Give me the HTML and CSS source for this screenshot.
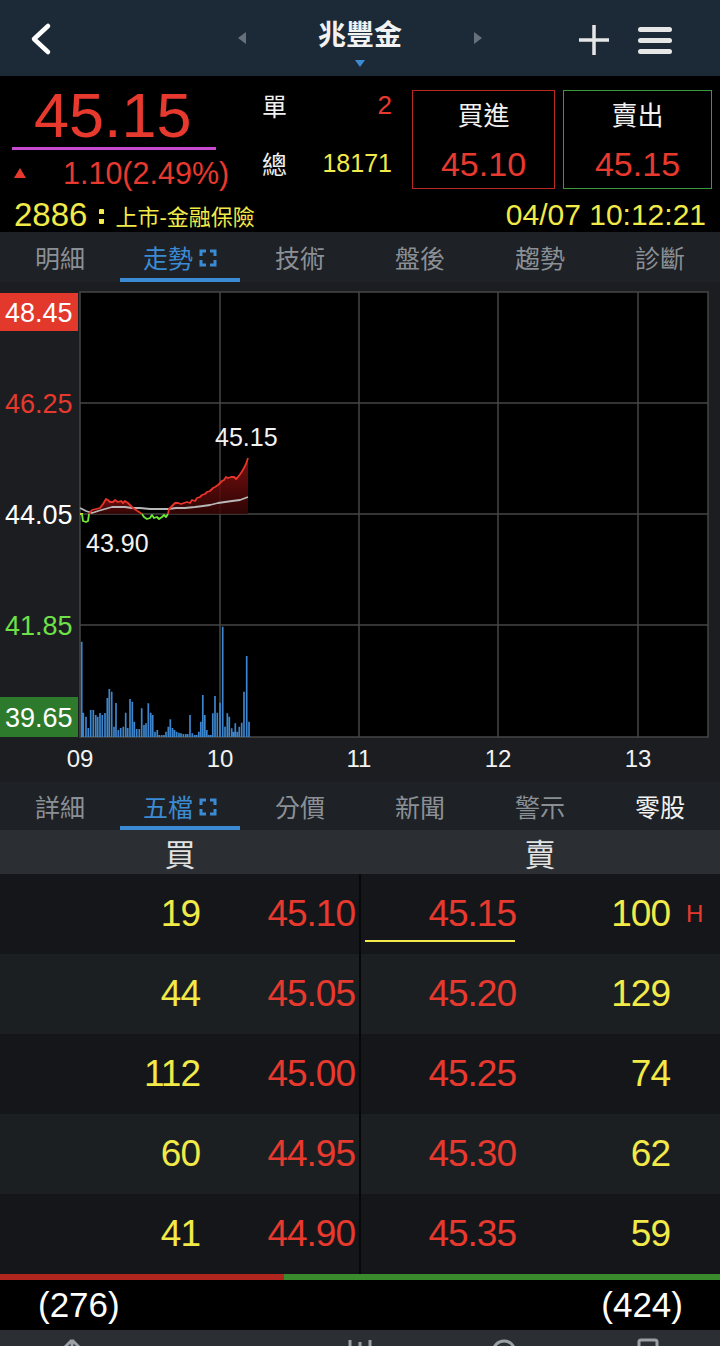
FILE: index.html
```html
<!DOCTYPE html>
<html lang="zh-Hant">
  <head>
    <meta charset="UTF-8" />
    <title>兆豐金 - 走勢</title>
    <link rel="stylesheet" href="styles.css" />
  </head>
  <body>
    <!-- Top bar -->
    <header class="topbar">
      <button class="icon-btn back-btn" aria-label="返回">
        <svg width="26" height="34" viewBox="0 0 26 34">
          <path d="M20 4 L6 17 L20 30" fill="none" stroke="#fff" stroke-width="4.5" stroke-linecap="round" stroke-linejoin="round" />
        </svg>
      </button>
      <div class="stock-switch">
        <span class="arrow arrow-left"></span>
        <div class="stock-name">
          <h1>兆豐金</h1>
          <span class="caret"></span>
        </div>
        <span class="arrow arrow-right"></span>
      </div>
      <div class="top-actions">
        <button class="icon-btn" aria-label="加入自選">
          <svg width="32" height="32" viewBox="0 0 32 32">
            <path d="M16 1V31M1 16H31" stroke="#e6e6e6" stroke-width="3.5" />
          </svg>
        </button>
        <button class="icon-btn" aria-label="選單">
          <svg width="34" height="30" viewBox="0 0 34 30">
            <rect x="0" y="2" width="34" height="5" rx="2.5" fill="#e6e6e6" />
            <rect x="0" y="13" width="34" height="5" rx="2.5" fill="#e6e6e6" />
            <rect x="0" y="24" width="34" height="5" rx="2.5" fill="#e6e6e6" />
          </svg>
        </button>
      </div>
    </header>

    <!-- Quote -->
    <section class="quote">
      <div class="quote-top">
        <div class="last">
          <div class="last-price">45.15</div>
          <div class="last-line"></div>
          <div class="change">
            <span class="up"></span>
            <span>1.10(2.49%)</span>
          </div>
        </div>
        <div class="tick">
          <div class="tick-row">
            <span class="tick-label">單</span>
            <span class="tick-single">2</span>
          </div>
          <div class="tick-row tick-row-total">
            <span class="tick-label">總</span>
            <span class="tick-total">18171</span>
          </div>
        </div>
        <div class="orders">
          <button class="order-box order-buy">
            <span class="order-label">買進</span>
            <span class="order-price">45.10</span>
          </button>
          <button class="order-box order-sell">
            <span class="order-label">賣出</span>
            <span class="order-price">45.15</span>
          </button>
        </div>
      </div>
      <div class="quote-info">
        <div class="stock-code">
          <span class="code">2886</span>
          <span class="sep"></span>
          <span class="market">上市-金融保險</span>
        </div>
        <div class="quote-time">04/07 10:12:21</div>
      </div>
    </section>

    <nav class="tabs">
      <div class="tab">明細</div>
      <div class="tab active">
        走勢
        <svg class="expand" width="18" height="18" viewBox="0 0 18 18">
          <path d="M2 7V2H7M11 2H16V7M16 11V16H11M7 16H2V11" fill="none" stroke="currentColor" stroke-width="3" />
        </svg>
      </div>
      <div class="tab">技術</div>
      <div class="tab">盤後</div>
      <div class="tab">趨勢</div>
      <div class="tab">診斷</div>
    </nav>

    <!-- Intraday chart -->
    <section class="chart">
      <svg width="720" height="500" viewBox="0 0 720 500">
        <defs>
          <linearGradient id="upFill" x1="0" y1="0" x2="0" y2="1">
            <stop offset="0" stop-color="#8c1111" stop-opacity="0.85" />
            <stop offset="1" stop-color="#360505" stop-opacity="0.85" />
          </linearGradient>
        </defs>
        <rect x="80" y="10" width="628" height="445" fill="#000" />
        <g stroke="#464646" stroke-width="1.5" fill="none">
          <rect x="80" y="10" width="628" height="445" />
          <path d="M80 121H708M80 232H708M80 343H708M220 10V455M359 10V455M498 10V455M638 10V455" />
        </g>

        <!-- volume -->
        <path class="volume" d="M81.7 455V359.7M83.3 455V430.7M86 455V434.7M88.3 455V446M90.7 455V428M93.3 455V428M95.7 455V433M97.7 455V434.7M100 455V431M102.3 455V433M105 455V431M107.3 455V416M109.3 455V407M111.7 455V409.7M114 455V444.7M116 455V421M118.3 455V448M120.7 455V446M123.3 455V444.7M125.7 455V430.7M127.7 455V446M130 455V417M132.3 455V419.7M134.3 455V439.7M136.7 455V447M139.3 455V447M141.7 455V426.3M144 455V443M146 455V441.3M148.3 455V421.3M150.7 455V430.7M152.7 455V433M155 455V449.7M157.3 455V448M159.3 455V453M161.7 455V453M164 455V453M166 455V449.7M168.3 455V444.7M170.3 455V437.3M172.5 455V446M174.5 455V448M176.7 455V449.7M179 455V450.7M181 455V451.3M183.3 455V452M185.7 455V452M187.7 455V452M190 455V433M192.3 455V451.3M194.7 455V453M196.7 455V453M198.8 455V449.7M200.8 455V439.7M202.8 455V413M204.8 455V433M206.8 455V448M208.8 455V453M210.8 455V453M212.8 455V431.3M215 455V414M217.3 455V430.7M220 455V420.7M222.7 455V344.7M225 455V444.7M227.3 455V431.3M229.3 455V434.7M231.7 455V446.3M233.5 455V449.7M235.3 455V441.3M237.3 455V449.7M239.3 455V444.7M241.7 455V440.7M244 455V409.7M246.7 455V374M249 455V439.7" />

        <!-- price -->
        <polygon fill="url(#upFill)" points="89,232 92,228 96,227 100,226 103,222 106,217 108,218 110,220 113,220 115,218 118,220 121,219 123,221 125,219 128,221 130,223 133,226 136,228 139,230 142,232" />
        <polygon fill="url(#upFill)" points="168,232 169,227 172,224 175,221 178,221 181,222 184,221 187,220 190,221 192,218 195,219 197,216 200,215 202,213 205,212 207,210 210,209 213,206 215,205 218,203 220,201 222,199 224,198 226,195 228,196 231,195 234,195 236,197 238,195 241,191 244,186 246,182 248,176 248,232" />
        <polyline class="line-avg" points="80,226 86,229 92,231 98,229 105,227 112,225 118,225 125,225 132,226 140,226 150,227 160,227 168,227 176,226 185,226 195,225 203,224 210,223 218,221 225,220 232,219 240,218 248,215" />
        <polyline class="line-flat" points="80,232 83,232" />
        <polyline class="line-down" points="82,232 83,239 86,240 88,239 89,232" />
        <polyline class="line-down" points="142,232 144,235 147,237 150,236 152,233 154,236 157,235 159,237 162,235 164,233 166,235 168,232" />
        <polyline class="line-up" points="89,232 92,228 96,227 100,226 103,222 106,217 108,218 110,220 113,220 115,218 118,220 121,219 123,221 125,219 128,221 130,223 133,226 136,228 139,230 142,232" />
        <polyline class="line-up" points="168,232 169,227 172,224 175,221 178,221 181,222 184,221 187,220 190,221 192,218 195,219 197,216 200,215 202,213 205,212 207,210 210,209 213,206 215,205 218,203 220,201 222,199 224,198 226,195 228,196 231,195 234,195 236,197 238,195 241,191 244,186 246,182 248,176" />

        <text class="mark-label" x="215" y="164">45.15</text>
        <text class="mark-label" x="86" y="270">43.90</text>

        <!-- price axis -->
        <rect x="0" y="11" width="78" height="38" fill="#e3392d" />
        <text class="axis-label" x="5" y="40" fill="#fff">48.45</text>
        <text class="axis-label" x="5" y="131" fill="#e5392e">46.25</text>
        <text class="axis-label" x="5" y="242" fill="#fff">44.05</text>
        <text class="axis-label" x="5" y="353" fill="#6fe048">41.85</text>
        <rect x="0" y="415" width="78" height="40" fill="#2e7a2c" />
        <text class="axis-label" x="5" y="445" fill="#fff">39.65</text>

        <!-- time axis -->
        <text class="time-label" x="80" y="485">09</text>
        <text class="time-label" x="220" y="485">10</text>
        <text class="time-label" x="359" y="485">11</text>
        <text class="time-label" x="498" y="485">12</text>
        <text class="time-label" x="638" y="485">13</text>
      </svg>
    </section>

    <nav class="tabs tabs-sub">
      <div class="tab">詳細</div>
      <div class="tab active">
        五檔
        <svg class="expand" width="18" height="18" viewBox="0 0 18 18">
          <path d="M2 7V2H7M11 2H16V7M16 11V16H11M7 16H2V11" fill="none" stroke="currentColor" stroke-width="3" />
        </svg>
      </div>
      <div class="tab">分價</div>
      <div class="tab">新聞</div>
      <div class="tab">警示</div>
      <div class="tab tab-bright">零股</div>
    </nav>

    <!-- Five-level order book -->
    <div class="book-head">
      <span>買</span>
      <span>賣</span>
    </div>
    <div class="book">
      <div class="book-row">
        <div class="bid"><span class="qty">19</span><span class="price">45.10</span></div>
        <div class="ask"><span class="price current">45.15</span><span class="qty">100</span><span class="flag">H</span></div>
      </div>
      <div class="book-row">
        <div class="bid"><span class="qty">44</span><span class="price">45.05</span></div>
        <div class="ask"><span class="price">45.20</span><span class="qty">129</span><span class="flag"></span></div>
      </div>
      <div class="book-row">
        <div class="bid"><span class="qty">112</span><span class="price">45.00</span></div>
        <div class="ask"><span class="price">45.25</span><span class="qty">74</span><span class="flag"></span></div>
      </div>
      <div class="book-row">
        <div class="bid"><span class="qty">60</span><span class="price">44.95</span></div>
        <div class="ask"><span class="price">45.30</span><span class="qty">62</span><span class="flag"></span></div>
      </div>
      <div class="book-row">
        <div class="bid"><span class="qty">41</span><span class="price">44.90</span></div>
        <div class="ask"><span class="price">45.35</span><span class="qty">59</span><span class="flag"></span></div>
      </div>
    </div>

    <div class="ratio">
      <div class="ratio-bid" style="width: 39.4%"></div>
    </div>
    <div class="totals">
      <span>(276)</span>
      <span>(424)</span>
    </div>

    <footer class="toolbar">
      <div class="tool">
        <svg width="30" height="30" viewBox="0 0 30 30"><path d="M15 4L7 12M15 4L23 12M15 4V26" fill="none" stroke="#9aa0a6" stroke-width="3" /></svg>
      </div>
      <div class="tool tool-low">
        <svg width="30" height="30" viewBox="0 0 30 30"><rect x="4" y="6" width="22" height="18" rx="3" fill="none" stroke="#9aa0a6" stroke-width="3" /></svg>
      </div>
      <div class="tool">
        <svg width="30" height="30" viewBox="0 0 30 30"><path d="M5 4V26M15 6V26M25 4V26" fill="none" stroke="#9aa0a6" stroke-width="3" /></svg>
      </div>
      <div class="tool">
        <svg width="30" height="30" viewBox="0 0 30 30"><circle cx="15" cy="16" r="11" fill="none" stroke="#9aa0a6" stroke-width="3" /></svg>
      </div>
      <div class="tool">
        <svg width="30" height="30" viewBox="0 0 30 30"><rect x="6" y="4" width="18" height="22" rx="2" fill="none" stroke="#9aa0a6" stroke-width="3" /></svg>
      </div>
    </footer>
  </body>
</html>
```

FILE: styles.css
```css
* {
  margin: 0;
  padding: 0;
  box-sizing: border-box;
}

:root {
  --red: #e8392e;
  --yellow: #f1ea48;
  --green: #6fe048;
  --blue: #3b8bd4;
  --nav-bg: #1c2a38;
  --tab-bg: #1e2125;
  --tab-text: #8b9096;
  --row-dark: #141619;
  --row-light: #1c1f22;
}

body {
  width: 720px;
  background: #000;
  color: #fff;
  font-family: "Liberation Sans", Arial, "Noto Sans CJK TC", sans-serif;
  overflow-x: hidden;
}

button {
  font: inherit;
  color: inherit;
  background: none;
  border: none;
}

.icon-btn {
  display: flex;
  align-items: center;
  justify-content: center;
  cursor: pointer;
}

/* Top bar */
.topbar {
  display: grid;
  grid-template-columns: 1fr auto 1fr;
  align-items: center;
  height: 76px;
  padding: 0 28px;
  background: var(--nav-bg);
}

.back-btn {
  justify-self: start;
  margin-top: 2px;
}

.stock-switch {
  display: flex;
  align-items: center;
  gap: 72px;
  height: 76px;
}

.arrow {
  width: 0;
  height: 0;
  border-top: 6px solid transparent;
  border-bottom: 6px solid transparent;
}

.arrow-left {
  border-right: 8px solid #66717c;
}

.arrow-right {
  border-left: 8px solid #66717c;
}

.stock-name {
  display: flex;
  flex-direction: column;
  align-items: center;
  height: 76px;
  padding-top: 18px;
}

.stock-name h1 {
  font-size: 28px;
  line-height: 36px;
  font-weight: bold;
  color: #f2f2f2;
}

.caret {
  width: 0;
  height: 0;
  margin-top: 6px;
  border-left: 5px solid transparent;
  border-right: 5px solid transparent;
  border-top: 7px solid var(--blue);
}

.top-actions {
  justify-self: end;
  display: flex;
  align-items: center;
  gap: 28px;
  margin-right: 20px;
  margin-top: 4px;
}

/* Quote */
.quote {
  height: 156px;
  padding: 14px 8px 2px 12px;
  background: #000;
}

.quote-top {
  display: flex;
}

.last {
  width: 220px;
}

.last-price {
  padding-left: 22px;
  font-size: 63px;
  line-height: 50px;
  color: var(--red);
}

.last-line {
  width: 204px;
  height: 3px;
  margin-top: 7px;
  background: #c64bd0;
}

.change {
  display: flex;
  align-items: center;
  height: 36px;
  margin-top: 5px;
  font-size: 30.5px;
  color: var(--red);
}

.change .up {
  width: 0;
  height: 0;
  margin: 0 37px 0 2px;
  border-left: 6px solid transparent;
  border-right: 6px solid transparent;
  border-bottom: 10px solid var(--red);
}

.tick {
  width: 130px;
  margin-left: 30px;
}

.tick-row {
  display: flex;
  justify-content: space-between;
  align-items: center;
  height: 30px;
}

.tick-row-total {
  margin-top: 28px;
}

.tick-label {
  font-size: 25px;
  color: #f0f0f0;
}

.tick-single {
  font-size: 26px;
  color: var(--red);
}

.tick-total {
  font-size: 25px;
  color: var(--yellow);
}

.orders {
  display: flex;
  gap: 8px;
  margin-left: 20px;
}

.order-box {
  display: flex;
  flex-direction: column;
  align-items: center;
  width: 143px;
  height: 99px;
  border: 1px solid #b82a22;
}

.order-sell {
  width: 149px;
  border-color: #3c9a3c;
}

.order-label {
  font-size: 26px;
  line-height: 50px;
  color: #f2f2f2;
}

.order-price {
  font-size: 34px;
  line-height: 46px;
  color: var(--red);
}

.quote-info {
  display: flex;
  justify-content: space-between;
  align-items: center;
  height: 30px;
  margin-top: 9px;
  padding: 0 6px 0 2px;
  color: var(--yellow);
}

.stock-code {
  display: flex;
  align-items: center;
}

.code {
  font-size: 33px;
}

.sep {
  width: 5px;
  height: 15px;
  margin: 2px 11px 0 12px;
  border-radius: 1px;
  background: linear-gradient(var(--yellow) 0 5px, transparent 5px 10px, var(--yellow) 10px 15px);
}

.market {
  font-size: 22px;
}

.quote-time {
  font-size: 30px;
}

/* Tabs */
.tabs {
  display: flex;
  height: 50px;
  background: var(--tab-bg);
}

.tab {
  flex: 1;
  display: flex;
  align-items: center;
  justify-content: center;
  gap: 6px;
  padding-top: 4px;
  border-bottom: 4px solid transparent;
  font-size: 25px;
  color: var(--tab-text);
}

.tab.active {
  color: var(--blue);
  border-bottom-color: var(--blue);
}

.tab-bright {
  color: #f2f2f2;
}

.tabs-sub {
  height: 48px;
}

.expand {
  margin-top: 2px;
}

/* Chart */
.chart {
  height: 500px;
  background: #1b1d20;
}

.chart svg {
  display: block;
}

.volume {
  stroke: #3d85cc;
  stroke-width: 1.7;
  fill: none;
}

.line-up,
.line-down,
.line-avg,
.line-flat {
  fill: none;
  stroke-width: 1.8;
  stroke-linejoin: round;
}

.line-up {
  stroke: #e8342a;
}

.line-down {
  stroke: #6fe83a;
}

.line-flat {
  stroke: #e8e03c;
}

.line-avg {
  stroke: #b8b8b8;
}

.axis-label {
  font-family: "Liberation Sans", Arial, sans-serif;
  font-size: 27px;
}

.time-label {
  font-family: "Liberation Sans", Arial, sans-serif;
  font-size: 24px;
  fill: #f2f2f2;
  text-anchor: middle;
}

.mark-label {
  font-family: "Liberation Sans", Arial, sans-serif;
  font-size: 25px;
  fill: #f2f2f2;
}

/* Order book */
.book-head {
  display: grid;
  grid-template-columns: 1fr 1fr;
  align-items: center;
  height: 44px;
  background: #2b2f34;
  font-size: 31px;
  color: #e2e2e2;
  text-align: center;
}

.book-row {
  display: grid;
  grid-template-columns: 1fr 1fr;
  column-gap: 2px;
  height: 80px;
  background: #070809;
}

.bid,
.ask {
  display: grid;
  font-size: 37px;
  letter-spacing: -1px;
  line-height: 80px;
  background: var(--row-dark);
}

.book-row:nth-child(even) .bid,
.book-row:nth-child(even) .ask {
  background: var(--row-light);
}

.bid {
  grid-template-columns: 200px 155px;
}

.ask {
  grid-template-columns: 155px 154px 1fr;
}

.qty,
.price {
  text-align: right;
}

.qty {
  color: var(--yellow);
}

.price {
  color: var(--red);
}

.price.current {
  background: linear-gradient(var(--yellow), var(--yellow)) 4px 66px / 150px 2px no-repeat;
}

.flag {
  padding-left: 16px;
  font-size: 24px;
  letter-spacing: 0;
  color: var(--red);
}

.ratio {
  display: flex;
  height: 6px;
  background: #3a8a2e;
}

.ratio-bid {
  background: #b0261f;
}

.totals {
  display: flex;
  justify-content: space-between;
  align-items: center;
  height: 50px;
  padding: 0 37px 0 38px;
  font-size: 35px;
  background: #000;
}

/* Bottom toolbar */
.toolbar {
  display: grid;
  grid-template-columns: repeat(5, 1fr);
  height: 60px;
  background: #2b2f33;
}

.tool {
  display: flex;
  justify-content: center;
  padding-top: 6px;
}

.tool-low {
  padding-top: 22px;
}
```
